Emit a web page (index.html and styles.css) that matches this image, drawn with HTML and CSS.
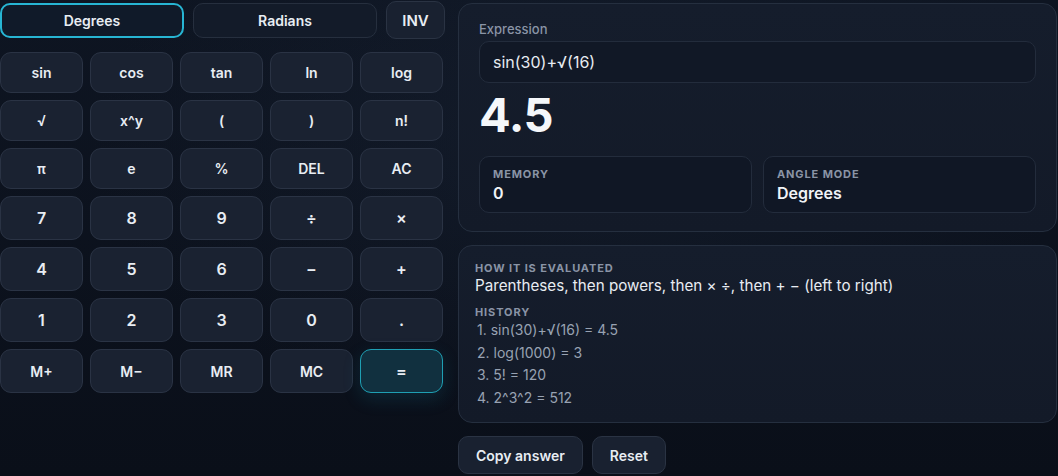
FILE: index.html
```html
<!DOCTYPE html>
<html lang="en">
<head>
<meta charset="utf-8">
<title>Scientific Calculator</title>
<link rel="stylesheet" href="styles.css">
</head>
<body>
<div class="app">
  <section class="left">
    <div class="modes">
      <button class="mode active">Degrees</button>
      <button class="mode">Radians</button>
      <button class="inv">INV</button>
    </div>
    <div class="keypad">
      <button class="key">sin</button>
      <button class="key">cos</button>
      <button class="key">tan</button>
      <button class="key">ln</button>
      <button class="key">log</button>
      <button class="key">√</button>
      <button class="key">x^y</button>
      <button class="key">(</button>
      <button class="key">)</button>
      <button class="key">n!</button>
      <button class="key">π</button>
      <button class="key">e</button>
      <button class="key">%</button>
      <button class="key">DEL</button>
      <button class="key">AC</button>
      <button class="key num">7</button>
      <button class="key num">8</button>
      <button class="key num">9</button>
      <button class="key num">÷</button>
      <button class="key num">×</button>
      <button class="key num">4</button>
      <button class="key num">5</button>
      <button class="key num">6</button>
      <button class="key num">−</button>
      <button class="key num">+</button>
      <button class="key num">1</button>
      <button class="key num">2</button>
      <button class="key num">3</button>
      <button class="key num">0</button>
      <button class="key num">.</button>
      <button class="key">M+</button>
      <button class="key">M−</button>
      <button class="key">MR</button>
      <button class="key">MC</button>
      <button class="key num equals">=</button>
    </div>
  </section>
  <section class="right">
    <div class="card display">
      <div class="label">Expression</div>
      <div class="expr">sin(30)+√(16)</div>
      <div class="result">4.5</div>
      <div class="stats">
        <div class="stat">
          <div class="cap">Memory</div>
          <div class="val">0</div>
        </div>
        <div class="stat">
          <div class="cap">Angle mode</div>
          <div class="val">Degrees</div>
        </div>
      </div>
    </div>
    <div class="card info">
      <div class="cap">How it is evaluated</div>
      <div class="rule">Parentheses, then powers, then × ÷, then + − (left to right)</div>
      <div class="cap hist-cap">History</div>
      <ol class="history">
        <li>1. sin(30)+√(16) = 4.5</li>
        <li>2. log(1000) = 3</li>
        <li>3. 5! = 120</li>
        <li>4. 2^3^2 = 512</li>
      </ol>
    </div>
    <div class="actions">
      <button class="action">Copy answer</button>
      <button class="action">Reset</button>
    </div>
  </section>
</div>
</body>
</html>
```
FILE: styles.css
```css
* { box-sizing: border-box; }
html, body { height: 100%; }
body {
  margin: 0;
  background:
    radial-gradient(ellipse 700px 400px at 55% 30%, rgba(30, 42, 62, 0.35), transparent 70%),
    linear-gradient(180deg, #0e1522 0%, #0a0f19 100%);
  font-family: Inter, "Noto Sans", sans-serif;
  color: #e8edf3;
  overflow: hidden;
}
button {
  font-family: inherit;
  color: #e8edf3;
  cursor: pointer;
}
.app {
  display: grid;
  grid-template-columns: 443px 599px;
  column-gap: 15px;
  padding: 1px 0 0 0;
}
.modes {
  display: flex;
  align-items: center;
  gap: 9px;
  height: 38px;
}
.mode {
  flex: 0 0 184px;
  height: 35px;
  margin-top: 1px;
  background: #131b29;
  border: 1px solid #262f3e;
  border-radius: 10px;
  font-size: 14px;
  font-weight: 600;
}
.mode.active {
  border: 2px solid #27b5d3;
  background: #101a29;
}
.inv {
  flex: 0 0 59px;
  height: 38px;
  background: #192130;
  border: 1px solid #2a3343;
  border-radius: 10px;
  font-size: 15px;
  font-weight: 600;
}
.keypad {
  margin-top: 13px;
  display: grid;
  grid-template-columns: repeat(5, 83px);
  grid-template-rows: 41px 41px 41px 44px 44px 44px 44px;
  gap: 7px;
}
.key {
  background: #1a2231;
  border: 1px solid #2a3344;
  border-radius: 11px;
  font-size: 14px;
  font-weight: 600;
  padding: 0;
}
.key.num { font-size: 16px; }
.key.equals {
  background: #11303f;
  border-color: #1f9fb3;
  box-shadow: 0 6px 18px rgba(20, 140, 170, 0.18);
}
.right {
  display: flex;
  flex-direction: column;
}
.card {
  background: linear-gradient(180deg, #151d2c 0%, #131a28 100%);
  border: 1px solid #252f3f;
  border-radius: 14px;
}
.display {
  margin-top: 2px;
  height: 229px;
  padding: 15px 20px 0 20px;
}
.label {
  font-size: 13px;
  font-weight: 500;
  color: #8a94a6;
  line-height: 20px;
}
.expr {
  margin-top: 2px;
  height: 42px;
  background: #111826;
  border: 1px solid #232c3c;
  border-radius: 10px;
  padding: 0 13px;
  display: flex;
  align-items: center;
  font-size: 16px;
  color: #e7ebf1;
}
.result {
  margin-top: 0;
  font-size: 47px;
  font-weight: 700;
  line-height: 64px;
  color: #f5f7fa;
  letter-spacing: -0.5px;
}
.stats {
  display: grid;
  grid-template-columns: 1fr 1fr;
  gap: 11px;
  margin-top: 9px;
}
.stat {
  height: 57px;
  background: #101725;
  border: 1px solid #232c3c;
  border-radius: 10px;
  padding: 10px 13px 0 13px;
}
.cap {
  font-size: 11px;
  font-weight: 700;
  letter-spacing: 0.08em;
  text-transform: uppercase;
  color: #8a94a6;
  line-height: 14px;
}
.val {
  margin-top: 1px;
  font-size: 16px;
  font-weight: 600;
  line-height: 22px;
  color: #f0f3f7;
}
.info {
  margin-top: 13px;
  height: 178px;
  padding: 15px 16px 0 16px;
}
.rule {
  font-size: 15.2px;
  line-height: 22px;
  color: #e8ecf2;
  margin-top: 0;
}
.hist-cap { margin-top: 8px; }
.history {
  list-style: none;
  margin: 0;
  padding: 0;
  font-size: 14px;
  color: #98a2b2;
}
.history li {
  line-height: 22.7px;
  padding-left: 2px;
}
.actions {
  display: flex;
  gap: 9px;
  margin-top: 13px;
}
.action {
  height: 38px;
  padding: 0 17px;
  background: #192130;
  border: 1px solid #2a3343;
  border-radius: 10px;
  font-size: 14px;
  font-weight: 600;
}
```
